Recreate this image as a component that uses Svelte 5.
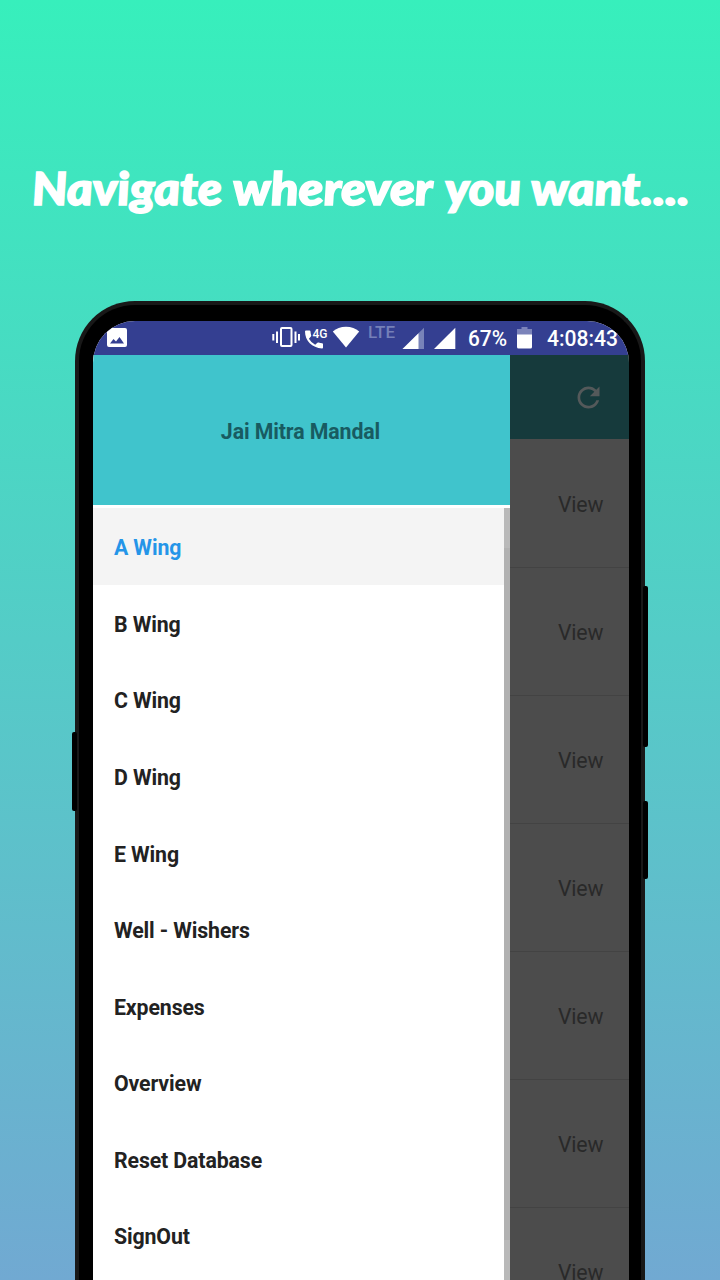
<script>
  const items = ['A Wing', 'B Wing', 'C Wing', 'D Wing', 'E Wing', 'Well - Wishers', 'Expenses', 'Overview', 'Reset Database', 'SignOut'];
  const rows = Array.from({ length: 7 }, (_, i) => i);
  const words = [
    { text: 'Navigate', x: 33, w: 190 },
    { text: 'wherever', x: 234, w: 200 },
    { text: 'you', x: 446, w: 76 },
    { text: 'want....', x: 532, w: 158 }
  ];
</script>

<main>
  <h1>
    <svg width="720" height="70" viewBox="0 0 720 70">
      {#each words as word}
        <text transform="translate({word.x} 49.5) skewX(4)" textLength={word.w} lengthAdjust="spacingAndGlyphs">{word.text}</text>
      {/each}
    </svg>
  </h1>

  <div class="phone">
    <i class="key left"></i>
    <i class="key power"></i>
    <i class="key volume"></i>
    <div class="screen">
      <div class="status">
        <svg width="536" height="34" viewBox="93 321 536 34">
          <path fill="#fff" fill-rule="evenodd" d="M109 328h16q2 0 2 2v15q0 2-2 2h-16q-2 0-2-2v-15q0-2 2-2zM110 343.500h14l-4.500-6.500-3.500 4.500-2.500-2.500z" />
          <g fill="none" stroke="#fff" stroke-width="2">
            <rect x="281" y="328" width="10.500" height="18" rx="1" />
            <path d="M277 331.500v11.500M273.300 334v6.500M295.500 331.500v11.500M299 334v6.500" />
          </g>
          <path fill="#fff" d="M306 331h3.500q.9 0 1 .9.100 2 .7 3.800.2.700-.3 1.200l-2 2.200q2.300 4 6.300 6l2.200-2q.5-.5 1.200-.2 1.800.6 3.500.7.900.1.900 1v3.300q0 .9-.9.900C312 348.600 305 341 305 332q0-1 1-1z" transform="translate(0 -.4)" />
          <text x="312.500" y="337.500" font-size="13.500" font-weight="500" fill="#fff" textLength="15" lengthAdjust="spacingAndGlyphs">4G</text>
          <path fill="#fff" d="M346 347.500 332.800 331.500Q338 326.800 346 326.800T359.200 331.500z" />
          <text x="368" y="338" font-size="16.500" font-weight="500" fill="#7580b8" textLength="27" lengthAdjust="spacingAndGlyphs">LTE</text>
          <path fill="#7883b9" d="M402.500 349 424 327.800V349z" />
          <path fill="#fff" d="M402.500 349 418.500 333.200V349z" />
          <path fill="#fff" d="M434 349 455.300 327.800V349z" />
          <text x="468" y="345.500" font-size="21.500" font-weight="500" fill="#fff" textLength="39" lengthAdjust="spacingAndGlyphs">67%</text>
          <path fill="#7b83ba" d="M521.500 327h6v2h4.500v6h-15v-6h4.500z" />
          <path fill="#fff" d="M517 334.500h15v12.500q0 1.500-1.500 1.500h-12q-1.500 0-1.500-1.500z" />
          <text x="547" y="345.500" font-size="21.500" font-weight="500" fill="#fff" textLength="71" lengthAdjust="spacingAndGlyphs">4:08:43</text>
        </svg>
      </div>

      <div class="body">
        <nav>
          <header>Jai Mitra Mandal</header>
          <div class="list">
            <ul>
              {#each items as item, i}
                <li class:active={i === 0}>{item}</li>
              {/each}
            </ul>
            <div class="bar"></div>
          </div>
        </nav>
        <section>
          <div class="toolbar">
            <svg width="33" height="33" viewBox="0 0 24 24">
              <path fill="#54595a" d="M17.650 6.350C16.200 4.900 14.210 4 12 4c-4.420 0-7.990 3.580-7.990 8s3.570 8 7.990 8c3.730 0 6.840-2.550 7.730-6h-2.080c-.82 2.330-3.040 4-5.650 4-3.310 0-6-2.690-6-6s2.690-6 6-6c1.660 0 3.140.690 4.220 1.780L13 11h7V4l-2.350 2.350z" />
            </svg>
          </div>
          {#each rows as row (row)}
            <div class="row">View</div>
          {/each}
        </section>
      </div>
    </div>
  </div>
</main>

<style>
  :global(body) { margin: 0; }
  main {
    width: 720px;
    height: 1280px;
    overflow: hidden;
    box-sizing: border-box;
    padding-top: 155px;
    background: linear-gradient(#37efbc, #71a9d2);
    font-family: Roboto, "Liberation Sans", sans-serif;
  }
  h1 { margin: 0 0 76px; height: 70px; }
  h1 svg { display: block; }
  h1 text {
    font: italic 900 45.500px Lato, sans-serif;
    fill: #fff;
    stroke: #fff;
    stroke-width: 1.600;
  }
  .phone {
    position: relative;
    box-sizing: border-box;
    width: 570px;
    height: 1040px;
    margin-left: 75px;
    padding: 16px 12px 0 14px;
    border: 4px solid #181818;
    border-bottom: 0;
    border-radius: 60px 60px 0 0;
    background: #000;
  }
  .key { position: absolute; width: 5px; background: #000; border-radius: 2px; }
  .left { left: -7px; top: 427px; height: 79px; }
  .power { right: -7px; top: 281px; height: 161px; }
  .volume { right: -7px; top: 496px; height: 78px; }
  .screen {
    width: 536px;
    height: 1020px;
    overflow: hidden;
    border-radius: 42px 42px 0 0;
    background: #fff;
  }
  .status { height: 34px; background: #343f91; }
  .status svg { display: block; }
  .body { display: flex; height: 986px; }
  nav { width: 417px; background: #fff; }
  header {
    display: flex;
    align-items: center;
    justify-content: center;
    height: 150px;
    padding: 2px 2px 0 0;
    box-sizing: border-box;
    background: #40c4cc;
    color: #185b61;
    font-size: 21.300px;
    letter-spacing: -0.100px;
    font-weight: 700;
  }
  .list { display: flex; height: 833px; margin-top: 3px; }
  ul { flex: 1; margin: 0; padding: 0; list-style: none; }
  li {
    display: flex;
    align-items: center;
    height: 76.580px;
    padding: 3px 0 0 21px;
    box-sizing: border-box;
    color: #222;
    font-size: 21.300px;
    letter-spacing: -0.120px;
    font-weight: 700;
  }
  li.active { color: #2495e8; background: #f4f4f4; }
  .bar { width: 6px; background: linear-gradient(#b9b9b9 40px, #b1b1b1 40px 732px, #b9b9b9 732px); }
  section { width: 119px; background: #4c4c4c; }
  .toolbar {
    display: flex;
    align-items: center;
    justify-content: flex-end;
    height: 84px;
    box-sizing: border-box;
    padding-right: 24px;
    background: #163a3c;
  }
  .row {
    display: flex;
    align-items: center;
    height: 128px;
    box-sizing: border-box;
    padding: 2px 0 0 48px;
    box-shadow: 0 1px #434343;
    color: #292929;
    font-size: 21.300px;
    letter-spacing: -0.200px;
  }
</style>
